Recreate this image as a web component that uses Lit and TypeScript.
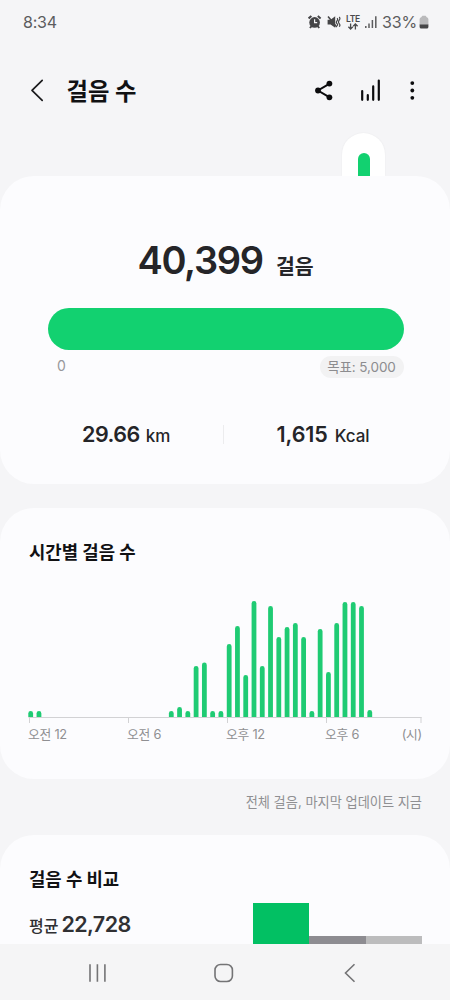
import { LitElement, html, svg, css } from "lit";
import { customElement } from "lit/decorators.js";

const FONT = css`"Inter", "Noto Sans CJK KR", sans-serif`;

@customElement("status-bar")
class StatusBar extends LitElement {
  static styles = css`
    :host { display: flex; height: 44px; padding: 0 21px 0 23px; align-items: center; justify-content: space-between; font-family: ${FONT}; color: #5c5c5e; }
    .time { font-size: 16px; line-height: 20px; letter-spacing: -0.2px; }
    .right { display: flex; align-items: center; }
    .battery { font-size: 16px; line-height: 20px; width: 37px; letter-spacing: -0.1px; white-space: nowrap; }
    svg { display: block; }
    .mute { margin-left: 5px; }
    .signal { margin-right: 4px; }
    .lte { display: flex; flex-direction: column; align-items: center; width: 16px; margin: 0 3px 0 4px; }
    .lte span { font-size: 8.5px; line-height: 8px; font-weight: 600; letter-spacing: -0.3px; color: #4a4a4c; }
  `;
  render() {
    return html`
      <div class="time">8:34</div>
      <div class="right">
        <svg width="14" height="14" viewBox="0 0 14 14">
          <circle cx="6.6" cy="7.4" r="5.3" fill="#454547" />
          <path d="M.6 3.4 3.4 1.1M12.6 3.4 9.8 1.1M2 13 3.6 11M11.2 13 9.6 11" stroke="#454547" stroke-width="2" />
          <path d="M6.6 4.3v3.4h2.6" stroke="#f5f5f7" stroke-width="1.2" fill="none" />
        </svg>
        <svg class="mute" width="14" height="14" viewBox="0 0 14 14">
          <path d="M.6 4.8h3L8.2 1.2v11.6L3.6 9.4H.6z" fill="#454547" />
          <path d="M1 1.6 9.8 12" stroke="#454547" stroke-width="1.5" />
          <path d="M10 3.2q1.3 1 0 2.6t0 2.8 0 2.2M12.2 2q1.4 1.4 0 3.2t0 3.4 0 3" stroke="#454547" stroke-width="1.2" fill="none" />
        </svg>
        <div class="lte">
          <span>LTE</span>
          <svg width="12" height="7" viewBox="0 0 12 7"><path d="M3.6 .4V6M1.4 3.8 3.6 6l2.2-2.2M8.4 6.6V1M6.2 3.2 8.4 1l2.2 2.2" stroke="#4a4a4c" stroke-width="1.3" fill="none" /></svg>
        </div>
        <svg class="signal" width="14" height="14" viewBox="0 0 14 14">
          <path d="M1.8 11v2M5 8.4V13M8.4 5V13M11.8 1.2V13" stroke="#5c5c5e" stroke-width="1.5" />
        </svg>
        <div class="battery">33%</div>
        <svg width="10" height="14" viewBox="0 0 10 14">
          <path d="M.6 4.2Q.6 2.6 2.2 2.2L3.4 .8h3.2l1.2 1.4Q9.4 2.6 9.4 4.2V10H.6z" fill="#bababc" />
          <path d="M.6 9.6H9.4v2.4Q9.4 13.6 7.8 13.6H2.2Q.6 13.6.6 12z" fill="#454547" />
        </svg>
      </div>`;
  }
}

@customElement("page-header")
class PageHeader extends LitElement {
  static styles = css`
    :host { display: flex; align-items: center; height: 89px; box-sizing: border-box; padding: 0 28px 0 29px; font-family: ${FONT}; margin-top: 2px; margin-bottom: -2px; }
    h1 { margin: 3px auto 0 21.5px; font: 700 23.3px/30px ${FONT}; color: #111113; white-space: nowrap; }
    svg { display: block; }
    .share { margin-right: 26px; }
    .stats { margin-right: 20.5px; }
  `;
  render() {
    return html`
      <svg width="16" height="24" viewBox="0 0 16 24"><path d="M13.2 1.4 3 11.4 13.2 21.4" fill="none" stroke="#1a1a1c" stroke-width="1.7" stroke-linecap="round" stroke-linejoin="round" /></svg>
      <h1>걸음 수</h1>
      <svg class="share" width="20" height="22" viewBox="0 0 20 22">
        <path d="M15.2 3.8 4 10.5l11.2 6.7" fill="none" stroke="#0c0c0e" stroke-width="2" />
        <circle cx="15.4" cy="3.6" r="2.9" fill="#0c0c0e" /><circle cx="4" cy="10.5" r="2.9" fill="#0c0c0e" /><circle cx="15.4" cy="17.3" r="2.9" fill="#0c0c0e" />
      </svg>
      <svg class="stats" width="22" height="24" viewBox="0 0 22 24">
        <path d="M2.2 12V20.8M7.8 16.2V20.8M13.2 7.4V20.8M18.8 1.6V20.8" stroke="#0c0c0e" stroke-width="2.2" stroke-linecap="round" />
      </svg>
      <svg width="20" height="22" viewBox="0 0 20 22"><g fill="#0c0c0e"><circle cx="10.3" cy="3.1" r="1.9" /><circle cx="10.3" cy="10.5" r="1.9" /><circle cx="10.3" cy="17.8" r="1.9" /></g></svg>`;
  }
}

@customElement("goal-card")
class GoalCard extends LitElement {
  static styles = css`
    :host { display: block; height: 308px; box-sizing: border-box; border-radius: 34px; background: #fcfcfe; padding: 60px 46.5px 0 47.5px; font-family: ${FONT}; color: #252528; }
    .total { display: flex; justify-content: center; align-items: baseline; gap: 13px; height: 48px; line-height: 48px; white-space: nowrap; }
    .count { font-size: 38px; font-weight: 600; letter-spacing: -1.3px; }
    .unit { font-size: 20.5px; font-weight: 600; }
    .bar { height: 42px; margin-top: 24px; border-radius: 21px; background: #12d170; }
    .range { display: flex; justify-content: space-between; align-items: center; margin-top: 6px; height: 22px; padding-left: 9.5px; font-size: 13px; color: #98989b; }
    .zero { margin-top: -3px; font-size: 14px; }
    .goal { box-sizing: border-box; width: 84px; height: 22px; line-height: 23px; text-align: center; border-radius: 11px; background: #f2f2f3; color: #8c8c8f; font-size: 13.5px; letter-spacing: -0.1px; white-space: nowrap; }
    .facts { display: grid; grid-template-columns: 175px 1px 1fr; align-items: center; margin-top: 41px; height: 30px; }
    .fact { display: flex; align-items: baseline; gap: 6px; white-space: nowrap; }
    .first { padding-left: 34.5px; }
    .second { padding-left: 53px; gap: 7px; }
    .fact b { font-size: 21.5px; font-weight: 600; letter-spacing: -0.5px; }
    .second b { letter-spacing: -0.1px; }
    .fact span { font-size: 17px; font-weight: 500; }
    .rule { height: 19px; background: #ececee; }
  `;
  render() {
    return html`
      <div class="total"><span class="count">40,399</span><span class="unit">걸음</span></div>
      <div class="bar"></div>
      <div class="range"><span class="zero">0</span><span class="goal">목표: 5,000</span></div>
      <div class="facts">
        <div class="fact first"><b>29.66</b><span>km</span></div>
        <div class="rule"></div>
        <div class="fact second"><b>1,615</b><span>Kcal</span></div>
      </div>`;
  }
}

// Bar heights in pixels, one per half hour starting at midnight.
const HALF_HOURS = [
  6, 6, 0, 0, 0, 0, 0, 0, 0, 0, 0, 0, 0, 0, 0, 0, 0, 6, 10, 6, 51, 54.5, 6, 6,
  73, 91, 42, 116, 51, 111, 80, 90, 94, 80, 6, 88, 45, 94, 115, 115, 111, 7,
];

@customElement("hourly-card")
class HourlyCard extends LitElement {
  static styles = css`
    :host { display: block; height: 271px; box-sizing: border-box; border-radius: 34px; background: #fcfcfe; margin-top: 24px; padding: 32px 28px 0 29px; font-family: ${FONT}; }
    h2 { margin: 0; font: 700 17.8px/26px ${FONT}; color: #111113; white-space: nowrap; }
    svg { display: block; margin: 33px 0 0 -1px; }
    .hours { display: grid; grid-template-columns: 99px 99px 99px 1fr auto; margin-left: -1px; margin-top: 3px; font-size: 12.8px; line-height: 18px; letter-spacing: -0.25px; color: #8f8f92; white-space: nowrap; }
  `;
  render() {
    return html`
      <h2>시간별 걸음 수</h2>
      <svg width="394" height="124" viewBox="0 0 394 124">
        ${HALF_HOURS.map((h, i) => {
          if (!h) return null;
          const x = 0.3 + i * 8.27, r = 2.4, top = 118 - h;
          return svg`<path fill="#1fcb73" d="M${x} 118V${top + r}a${r} ${r} 0 0 1 ${r * 2} 0V118z"/>`;
        })}
        <path d="M.5 118.5H393.5M1.5 118V124M100.5 118V124M199.5 118V124M298.5 118V124M393 118V124" stroke="#d2d2d4" fill="none" />
      </svg>
      <div class="hours"><span>오전 12</span><span>오전 6</span><span>오후 12</span><span>오후 6</span><span>(시)</span></div>`;
  }
}

@customElement("compare-card")
class CompareCard extends LitElement {
  static styles = css`
    :host { display: flex; justify-content: space-between; flex: 1; min-height: 0; box-sizing: border-box; border-radius: 34px 34px 0 0; background: #fcfcfe; padding: 32px 28px 0 29px; font-family: ${FONT}; }
    h2 { margin: 0; font: 700 17.8px/26px ${FONT}; color: #111113; white-space: nowrap; }
    .average { display: flex; align-items: baseline; gap: 3px; margin-top: 17px; line-height: 28px; color: #303033; white-space: nowrap; }
    .average span { font-size: 16px; font-weight: 500; }
    .average b { font-size: 21.5px; font-weight: 600; letter-spacing: -0.6px; }
    .bars { display: flex; align-items: flex-end; align-self: flex-end; width: 169px; }
    .bars div { flex: 1; }
    .mine { height: 41px; background: #02c063; }
    .peers { height: 8px; background: #8d8c91; }
    .all { height: 8px; background: #bcbcbd; }
  `;
  render() {
    return html`
      <div>
        <h2>걸음 수 비교</h2>
        <div class="average"><span>평균</span><b>22,728</b></div>
      </div>
      <div class="bars"><div class="mine"></div><div class="peers"></div><div class="all"></div></div>`;
  }
}

@customElement("nav-bar")
class NavBar extends LitElement {
  static styles = css`
    :host { display: flex; align-items: center; justify-content: space-between; height: 56px; padding: 2px 89px 0 86px; box-sizing: border-box; background: #f5f5f6; }
    svg { display: block; }
  `;
  render() {
    return html`
      <svg width="22" height="22" viewBox="0 0 22 22"><path d="M4 2.2V19.8M11.4 2.2V19.8M18.9 2.2V19.8" stroke="#747476" stroke-width="1.6" /></svg>
      <svg width="22" height="22" viewBox="0 0 22 22"><rect x="2" y="2.5" width="17.4" height="17" rx="5.5" fill="none" stroke="#747476" stroke-width="1.6" /></svg>
      <svg width="22" height="22" viewBox="0 0 22 22"><path d="M15.5 2.2 6.5 11l9 8.8" fill="none" stroke="#747476" stroke-width="1.6" /></svg>`;
  }
}

@customElement("app-root")
class AppRoot extends LitElement {
  static styles = css`
    :host { display: flex; flex-direction: column; width: 450px; height: 1000px; overflow: hidden; background: #f5f5f7; font-family: ${FONT}; }
    .days { display: flex; justify-content: flex-end; height: 43px; padding-right: 65px; }
    .day { display: flex; justify-content: center; align-items: flex-end; width: 43px; border-radius: 22px 22px 0 0; background: #fff; box-shadow: 0 0 2px #0000000f; clip-path: inset(-2px -2px 0 -2px); }
    .fill { width: 12px; height: 23px; border-radius: 6px 6px 0 0; background: #12d170; }
    .note { height: 56px; box-sizing: border-box; padding: 13px 28px 0 0; text-align: right; font-size: 13.2px; line-height: 20px; color: #8f8f92; white-space: nowrap; }
  `;
  render() {
    return html`
      <status-bar></status-bar>
      <page-header></page-header>
      <div class="days"><div class="day"><div class="fill"></div></div></div>
      <goal-card></goal-card>
      <hourly-card></hourly-card>
      <div class="note">전체 걸음, 마지막 업데이트 지금</div>
      <compare-card></compare-card>
      <nav-bar></nav-bar>`;
  }
}
